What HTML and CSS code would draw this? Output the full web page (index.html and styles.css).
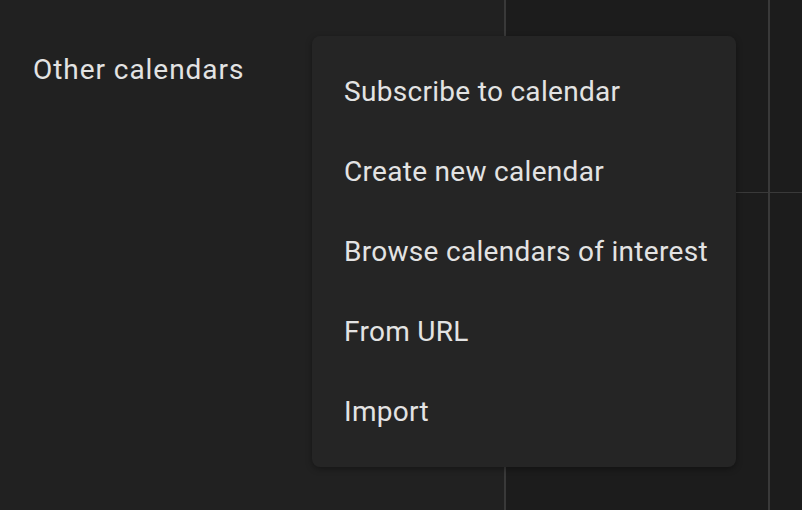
FILE: index.html
```html
<!DOCTYPE html>
<html lang="en">
<head>
    <meta charset="UTF-8">
    <meta name="viewport" content="width=device-width, initial-scale=1.0">
    <title>Calendar - Other calendars</title>
    <link rel="stylesheet" href="styles.css">
</head>
<body>
    <div class="app">
        <aside class="sidebar">
            <h2 class="section-title">Other calendars</h2>
        </aside>
        <main class="grid">
            <div class="cell"></div>
            <div class="cell"></div>
            <div class="cell"></div>
            <div class="cell"></div>
        </main>
        <ul class="menu">
            <li>Subscribe to calendar</li>
            <li>Create new calendar</li>
            <li>Browse calendars of interest</li>
            <li>From URL</li>
            <li>Import</li>
        </ul>
    </div>
</body>
</html>
```

FILE: styles.css
```css
html, body {
    margin: 0;
    padding: 0;
    height: 100%;
}
body {
    background-color: #1c1c1c;
    color: #e3e3e3;
    font-family: Roboto, "Noto Sans", sans-serif;
}
.app {
    position: relative;
    display: flex;
    height: 510px;
    overflow: hidden;
}
.sidebar {
    width: 506px;
    flex-shrink: 0;
    box-sizing: border-box;
    background-color: #212121;
    border-right: 2px solid #393939;
    padding: 52px 0 0 33px;
}
.section-title {
    margin: 0;
    font-size: 28px;
    font-weight: 400;
    line-height: 36px;
    letter-spacing: 0.95px;
}
.grid {
    flex: 1;
    display: grid;
    grid-template-columns: 264px 1fr;
    grid-template-rows: 193px 1fr;
}
.cell {
    border-right: 2px solid #393939;
    border-bottom: 1px solid #393939;
}
.cell:nth-child(2n) {
    border-right: none;
}
.cell:nth-child(n+3) {
    border-bottom: none;
}
.menu {
    position: absolute;
    top: 36px;
    left: 312px;
    width: 424px;
    margin: 0;
    padding: 15px 0 16px;
    list-style: none;
    box-sizing: border-box;
    background-color: #252525;
    border-radius: 8px;
    box-shadow: 0 2px 6px rgba(0, 0, 0, 0.35);
}
.menu li {
    height: 80px;
    display: flex;
    align-items: center;
    padding-left: 32px;
    font-size: 28px;
    letter-spacing: 0.3px;
}
```
